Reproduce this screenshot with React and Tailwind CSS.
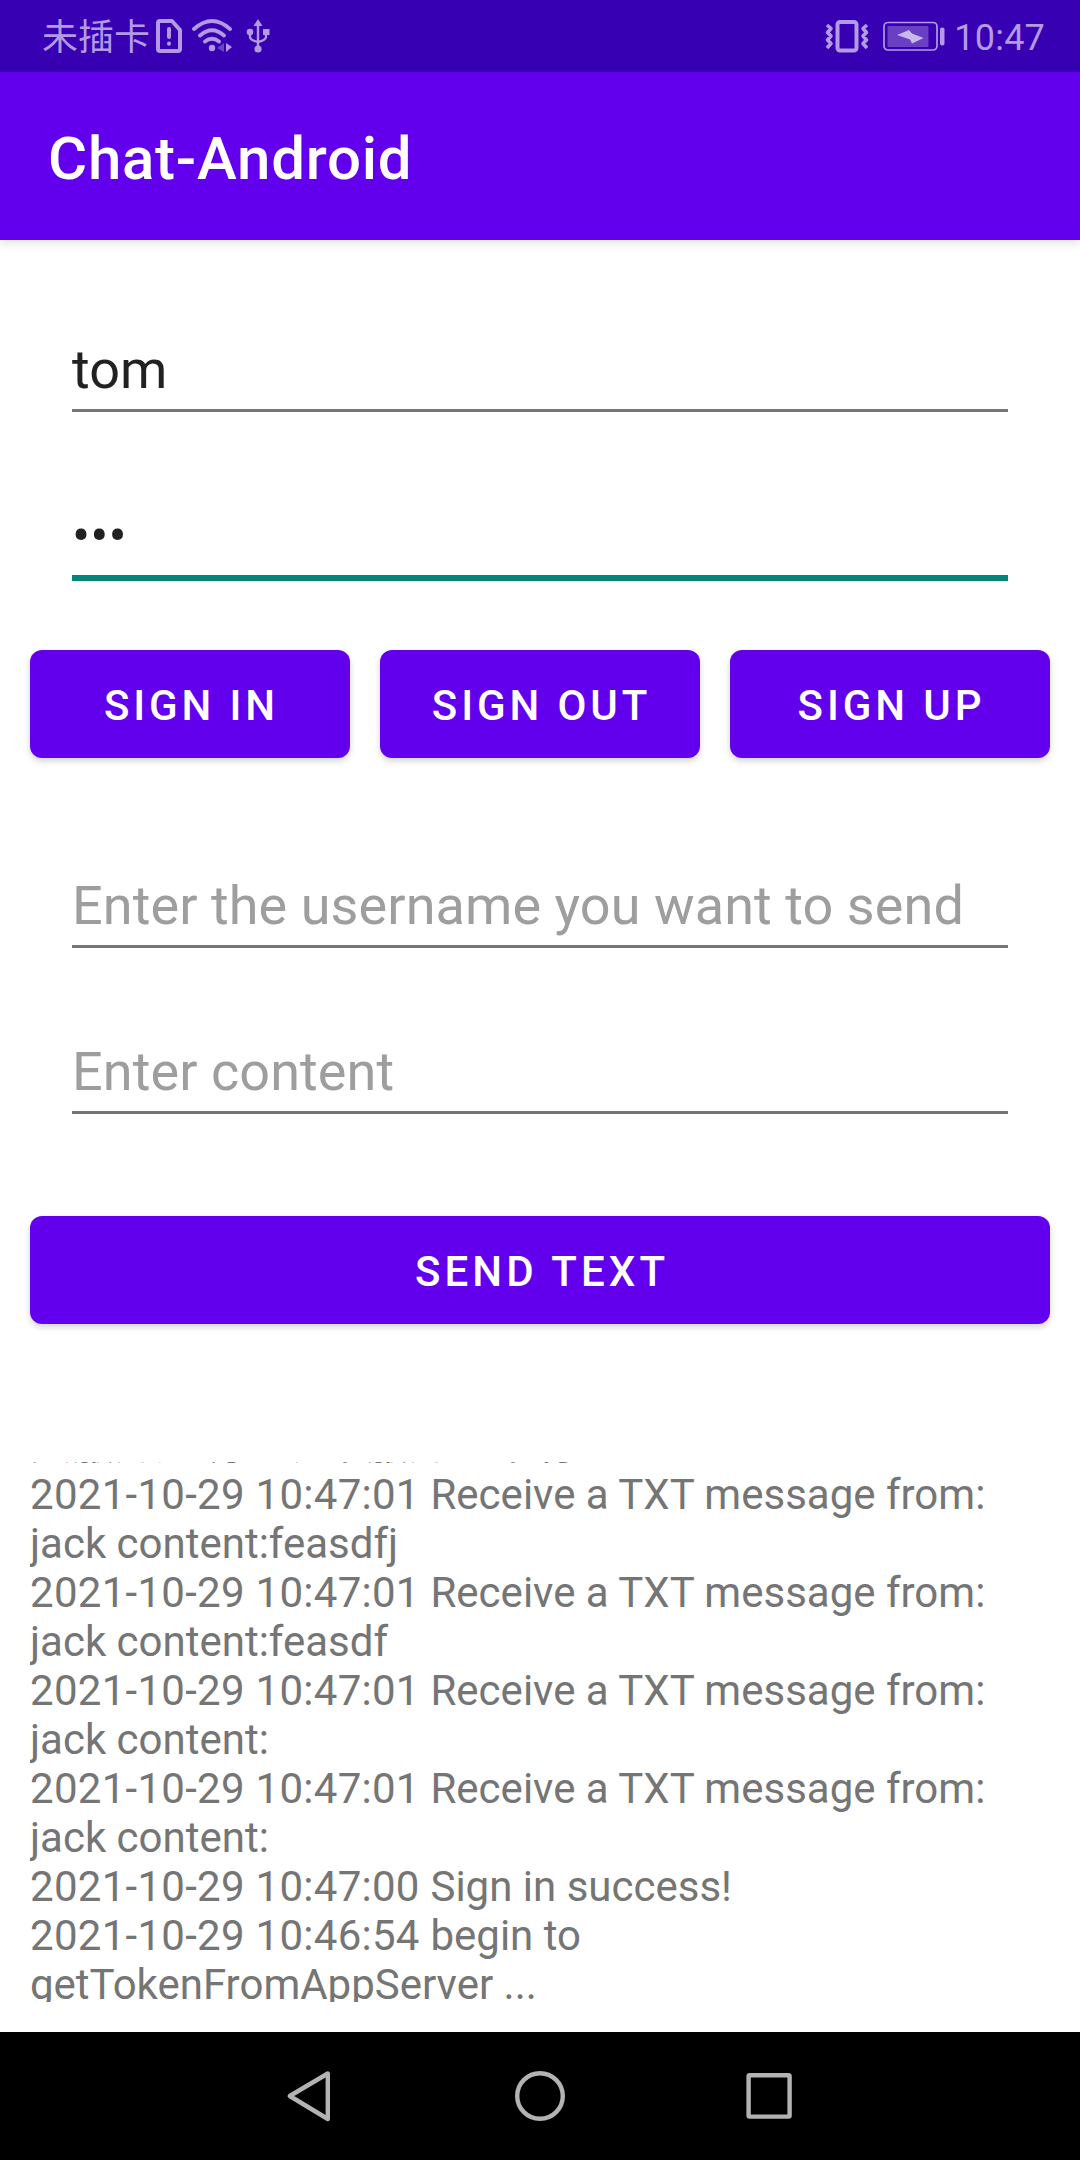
const messages = [
  { text: "只服务用明一说不服务地中有" },
  { time: "2021-10-29 10:47:01 ", text: "Receive a TXT message from:" },
  { text: "jack content:feasdfj" },
  { time: "2021-10-29 10:47:01 ", text: "Receive a TXT message from:" },
  { text: "jack content:feasdf" },
  { time: "2021-10-29 10:47:01 ", text: "Receive a TXT message from:" },
  { text: "jack content:" },
  { time: "2021-10-29 10:47:01 ", text: "Receive a TXT message from:" },
  { text: "jack content:" },
  { time: "2021-10-29 10:47:00 ", text: "Sign in success!" },
  { time: "2021-10-29 10:46:54 ", text: "begin to" },
  { text: "getTokenFromAppServer ..." },
];

function StatusBar() {
  return (
    <div className="flex h-[72px] shrink-0 items-center bg-[#3700b3] pl-[42px] pr-[35px] text-[#b39ae3]">
      <span className="pt-[5px] text-[36px] font-normal leading-[67px]">未插卡</span>
      <svg className="ml-[6px] h-[34px] w-[28px]" viewBox="0 0 28 34" fill="none" stroke="currentColor" strokeWidth="4" strokeLinejoin="round" strokeLinecap="round">
        <path d="M4 2h12l8 9v19q0 2-2 2H4q-2 0-2-2V4q0-2 2-2z" />
        <path d="M13 10v8M13 24.500v.2" />
      </svg>
      <svg className="ml-[8px] h-[34px] w-[42px]" viewBox="0 0 42 34" fill="none" stroke="currentColor" strokeWidth="3.800" strokeLinecap="round">
        <path d="M2 10Q20 -6 38 10M8 16.500Q20 6 32 16.500M13 22.500Q20 17 27 22.500" />
        <circle cx="20" cy="29" r="3.200" fill="currentColor" stroke="none" />
        <path d="M32 24v9l-7-4z" fill="#6a45c4" stroke="none" />
        <path d="M34 24l6 4-6 5z" fill="currentColor" stroke="none" />
      </svg>
      <svg className="ml-[12px] h-[36px] w-[24px]" viewBox="0 0 24 36" fill="none" stroke="currentColor" strokeWidth="2.400">
        <path d="M12 6v24M4 14v5q0 3 8 5M20 14v5q0 3-8 5" />
        <path d="M12 1l4.500 7h-9z" fill="currentColor" stroke="none" />
        <circle cx="4" cy="14" r="3.300" fill="currentColor" stroke="none" />
        <rect x="17" y="11" width="6.500" height="6" fill="currentColor" stroke="none" />
        <circle cx="12" cy="31" r="3.600" fill="currentColor" stroke="none" />
      </svg>
      <div className="grow" />
      <svg className="h-[34px] w-[44px]" viewBox="0 0 44 34" fill="none" stroke="currentColor" strokeWidth="4">
        <rect x="12.500" y="3" width="19" height="28.500" rx="2.500" />
        <path strokeWidth="3.600" strokeLinejoin="round" d="M2 6l4 3.500-3.500 4L6 17l-3.500 4L6 24.500 2 29M42 6l-4 3.500 3.500 4L38 17l3.500 4-3.500 3.500 4 4.500" />
      </svg>
      <svg className="ml-[14px] h-[30px] w-[62px]" viewBox="0 0 62 30" fill="currentColor">
        <rect x="1" y="1.500" width="53" height="27.500" rx="4" fill="none" stroke="currentColor" strokeWidth="1.700" />
        <rect x="4.500" y="5" width="41" height="21" rx="1" fill="#6a3fc4" />
        <path fill="#c8b8ec" d="M14 14L26 9L29 12.500L40.500 17L29 22.500L27 18.500z" />
        <rect x="57" y="6.500" width="4.500" height="18" rx="2" />
      </svg>
      <span className="ml-[9px] pt-[4px] text-[36px] leading-[68px] tracking-[0.200px]">10:47</span>
    </div>
  );
}

function Field({ children, focused, hint }) {
  return (
    <div
      className={
        "mx-[72px] flex h-[166px] shrink-0 items-end text-[54px] leading-[64px] " +
        (focused ? "border-b-[6px] border-[#018577] pb-[7px] " : "border-b-[3px] border-[#757575] pb-[7px] ") +
        (hint ? "tracking-[0.080px] text-[#9e9e9e]" : "text-[#212121]")
      }
    >
      {children}
    </div>
  );
}

function Button({ children, wide }) {
  return (
    <button
      className={
        "h-[108px] flex-1 rounded-[12px] bg-[#6200ee] pt-[3px] text-[42px] font-medium text-white shadow-[0_3px_6px_rgba(0,0,0,0.18)] " +
        (wide ? "pl-[4px] tracking-[4.100px]" : "pl-[3px] tracking-[3.900px]")
      }
    >
      {children}
    </button>
  );
}

export default function App() {
  return (
    <div className="flex h-[2160px] w-[1080px] flex-col overflow-hidden bg-white font-['Roboto','Noto_Sans_CJK_SC',sans-serif]">
      <StatusBar />
      <header className="flex h-[168px] shrink-0 items-center bg-[#6200ee] pl-12 pt-[5px] text-[60px] font-medium tracking-[0.750px] text-white shadow-[0_2px_10px_rgba(0,0,0,0.15)]">
        Chat-Android
      </header>
      <div className="h-[6px] shrink-0" />
      <Field>tom</Field>
      <div className="h-[3px] shrink-0" />
      <Field focused>•••</Field>
      <div className="mt-[69px] flex gap-[30px] px-[30px]">
        <Button>SIGN IN</Button>
        <Button>SIGN OUT</Button>
        <Button>SIGN UP</Button>
      </div>
      <div className="h-[24px] shrink-0" />
      <Field hint>Enter the username you want to send</Field>
      <Field hint>Enter content</Field>
      <div className="mt-[102px] flex px-[30px]">
        <Button wide>SEND TEXT</Button>
      </div>
      <div className="mx-[30px] mt-[138px] flex h-[540px] shrink-0 flex-col justify-end overflow-hidden whitespace-pre text-[42px] leading-[49px] text-[#757575]">
        {messages.map((m, i) => (
          <div key={i} className="h-[49px] shrink-0 first:mb-px last:-mb-[7px]">
            {m.time && <span className="tracking-[0.280px]">{m.time}</span>}
            {m.text}
          </div>
        ))}
      </div>
      <nav className="mt-auto flex h-[128px] shrink-0 items-center justify-center bg-black">
        <svg className="h-[128px] w-[560px]" viewBox="260 0 560 128" fill="none" stroke="#b3b3b3" strokeWidth="4.400" strokeLinejoin="round">
          <path d="M327.800 41.500v45.500L289.800 64z" />
          <circle cx="540" cy="64" r="22.800" />
          <rect x="748.600" y="43.300" width="41" height="41.300" rx="1" />
        </svg>
      </nav>
    </div>
  );
}
